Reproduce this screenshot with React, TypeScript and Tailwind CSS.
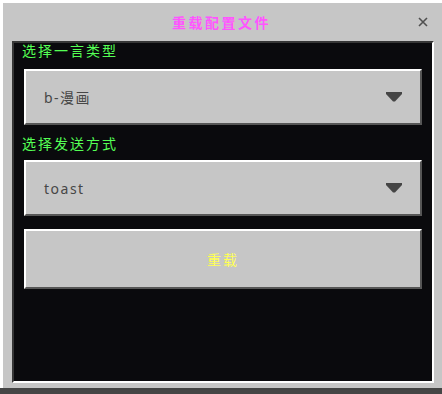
import { ReactNode } from 'react';

const font = { fontFamily: '"Noto Sans", "Noto Sans CJK SC", sans-serif' };

function Arrow() {
  return (
    <svg width="16" height="10" viewBox="0 0 16 10" className="shrink-0">
      <polygon points="0,0 16,0 16,2 9,9.5 7,9.5 0,2" fill="#454545" />
    </svg>
  );
}

function Bevel({ children, className }: { children: ReactNode; className?: string }) {
  return (
    <div
      className={`h-[56px] bg-[#c6c6c6] border-t-2 border-l-2 border-t-white border-l-white border-b-2 border-r-2 border-b-[#565656] border-r-[#565656] ${className ?? ''}`}
    >
      {children}
    </div>
  );
}

function Dropdown({ value }: { value: string }) {
  return (
    <Bevel className="flex items-center justify-between pl-[18px] pr-[18px]">
      <span className="text-[14px] text-[#474747] tracking-[1.5px]">{value}</span>
      <Arrow />
    </Bevel>
  );
}

export default function App() {
  return (
    <div className="w-[442px] h-[394px] bg-white flex flex-col overflow-hidden" style={font}>
      <div className="ml-[3px] mt-[3px] w-[439px] h-[385px] bg-[#c6c6c6] flex flex-col">
        <div className="h-[38px] relative flex items-center justify-center">
          <span className="text-[14px] font-bold text-[#ff55ff] tracking-[2.5px] ml-[-2px]">重载配置文件</span>
          <svg width="10" height="10" viewBox="0 0 10 10" className="absolute left-[415px] top-[14px]">
            <path d="M1 1 L9 9 M9 1 L1 9" stroke="#505050" strokeWidth="1.6" />
          </svg>
        </div>
        <div className="ml-[9px] w-[422px] h-[342px] bg-[#0a0a0d] border-t-2 border-l-2 border-t-[#373737] border-l-[#373737] border-b-2 border-r-2 border-b-white border-r-white pl-[10px] pr-[10px]">
          <div className="h-[26px] leading-[16px] text-[14px] text-[#55ff55] tracking-[2px] ml-[-2px]">选择一言类型</div>
          <Dropdown value="b-漫画" />
          <div className="h-[35px] pt-[11px] leading-[16px] text-[14px] text-[#55ff55] tracking-[2px] ml-[-2px]">选择发送方式</div>
          <Dropdown value="toast" />
          <Bevel className="mt-[13px] h-[60px] flex items-center justify-center">
            <span className="text-[14px] text-[#ffff55] tracking-[2px]">重载</span>
          </Bevel>
        </div>
      </div>
      <div className="h-[6px] w-full bg-[#454545]" />
    </div>
  );
}
